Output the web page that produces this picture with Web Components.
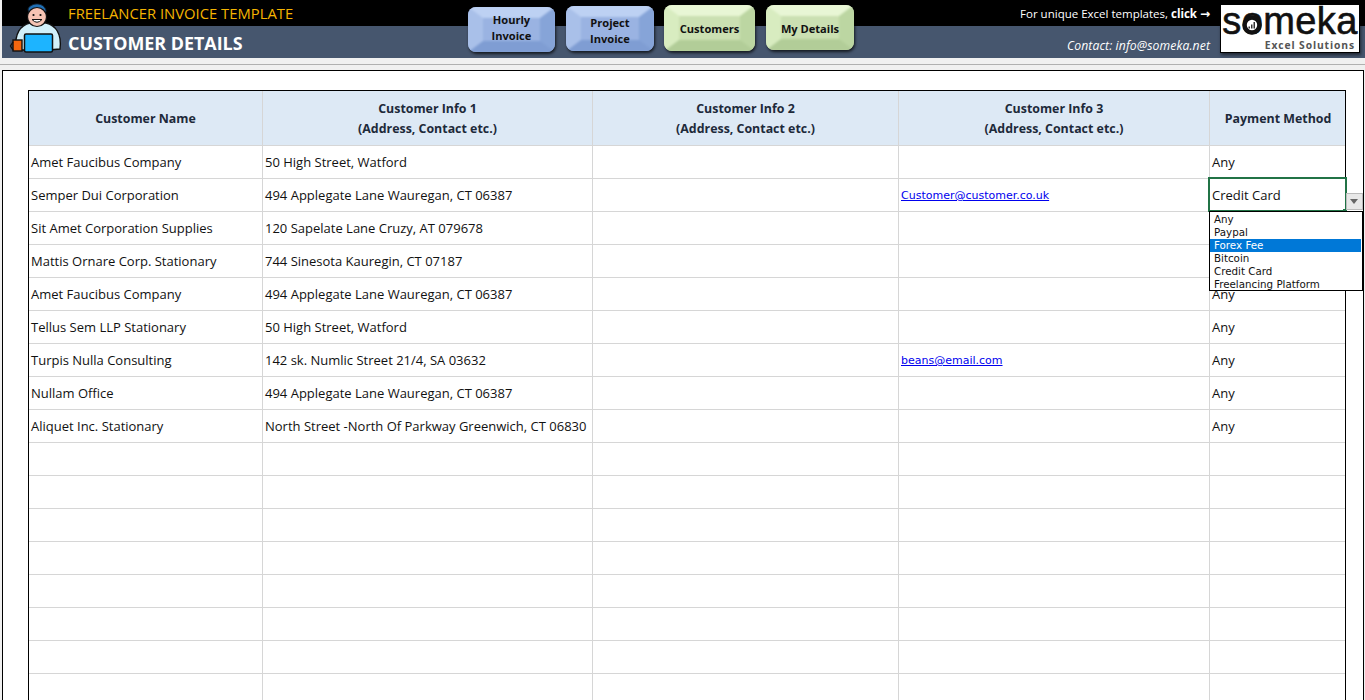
<!DOCTYPE html>
<html><head><meta charset="utf-8"><style>
html,body{margin:0;padding:0;height:700px;overflow:hidden;background:#f0f0f0;}
body{font-family:"Open Sans","Liberation Sans",sans-serif;}
</style></head><body>
<invoice-app></invoice-app>
<script>
class BevelButton extends HTMLElement{
 constructor(){super();this.attachShadow({mode:'open'}).innerHTML=`<style>
 :host{display:flex;align-items:center;justify-content:center;box-sizing:border-box;border-radius:8px;overflow:hidden;
 box-shadow:1px 2px 3px rgba(0,0,0,.7);font:700 11.1px/16px "Open Sans",sans-serif;color:#111;text-align:center;position:relative}
 :host([tone=blue]){background:#9ab3e2}
 :host([tone=green]){background:#cbe0b2}
 .bevel{position:absolute;inset:-1px;box-sizing:border-box;border-style:solid;border-width:12px 16px;filter:blur(1.2px)}
 :host([tone=blue]) .bevel{border-color:#bdd1f3 #86a4d8 #7f9dd3 #a9c0e9}
 :host([tone=green]) .bevel{border-color:#e8f6d5 #bcd6a2 #b2cd98 #d8ecc0}
 span{position:relative}
 </style><div class="bevel"></div><span><slot></slot></span>`}
}
customElements.define('bevel-button',BevelButton);

class AppHeader extends HTMLElement{
 constructor(){super();this.attachShadow({mode:'open'}).innerHTML=`<style>
 :host{display:block;height:58px;margin-left:2px;position:relative;background:linear-gradient(#000 0 26px,#46566e 26px)}
 .grid{display:grid;grid-template-columns:466px 98px 98px 102px 98px 1fr;height:58px;position:relative}
 .title{padding-left:66px;display:grid;grid-template-rows:26px 32px}
 .t1{color:#f5b400;font-size:14.8px;line-height:27px}
 .t2{color:#fff;font-weight:700;font-size:17.9px;line-height:35px}
 .person{position:absolute;left:6px;top:3px}
 .right{display:flex;justify-content:flex-end;min-width:0}
 .txt{display:grid;grid-template-rows:26px 32px;text-align:right;padding-right:10px;color:#fff;white-space:nowrap}
 .txt div:first-child{line-height:28px;font-size:11.5px}
 .txt div:first-child i{font:700 12px "DejaVu Sans",sans-serif}
 .txt div:last-child{font-style:italic;line-height:39px;font-size:12.2px;letter-spacing:.1px}
 .logo{width:140px;height:49px;margin:4px 5px 0 0;background:#fff;border:1px solid #000;box-sizing:border-box;box-shadow:1px 2px 3px rgba(0,0,0,.55);display:flex;flex-direction:column;align-items:center;flex:none;position:relative}
 .logo b{font:400 38px/31px "Liberation Sans",sans-serif;-webkit-text-stroke:.6px #111;letter-spacing:.4px;color:#111;display:block;height:34px;padding-top:1px;box-sizing:border-box}
 .logo span{font:700 10.3px/14px "Open Sans",sans-serif;color:#555;letter-spacing:.9px;align-self:flex-end;margin-right:4px}
 .logo svg{position:absolute;left:21px;top:10px}
 </style>
 <div class="grid">
  <div class="title"><div class="t1">FREELANCER INVOICE TEMPLATE</div><div class="t2">CUSTOMER DETAILS</div></div>
  <div><bevel-button tone="blue" style="margin-top:7px;width:87px;height:45px;padding-bottom:4px">Hourly<br>Invoice</bevel-button></div>
  <div><bevel-button tone="blue" style="margin-top:6px;width:88px;height:45px;padding-top:4px">Project<br>Invoice</bevel-button></div>
  <div><bevel-button tone="green" style="margin-top:5px;width:91px;height:46px;padding-top:2px">Customers</bevel-button></div>
  <div><bevel-button tone="green" style="margin-top:5px;width:88px;height:45px;padding-top:2px">My Details</bevel-button></div>
  <div class="right"><div class="txt"><div>For unique Excel templates, <b>click <i>→</i></b></div><div>Contact: info@someka.net</div></div>
   <div class="logo"><b>someka</b><span>Excel Solutions</span>
    <svg width="20" height="20" viewBox="0 0 20 20"><circle cx="10" cy="10" r="7.500" fill="#fff" stroke="#111" stroke-width="4.600"/><path d="M6.500 11.500h1.500v2h-1.500zM9 9.500h1.500v4H9zM11.500 7h1.500v6.500h-1.500z" fill="#333"/></svg></div></div>
 </div>
 <svg class="person" width="56" height="50" viewBox="0 0 56 50">
  <path d="M8 47 C6 30 13 22 22 20 L38 20 C47 22 54 30 52 46 L40 47Z" fill="#d2f0fa" stroke="#111" stroke-width="1.4"/>
  <path d="M20 6 C23 -1 37 -1 38 8 L37 11 L21 11Z" fill="#1f6fb5" stroke="#123" stroke-width="1"/>
  <ellipse cx="29" cy="14" rx="9.500" ry="9.500" fill="#f6c4b4" stroke="#111" stroke-width="1.2"/>
  <circle cx="25.500" cy="12" r="1.100" fill="#111"/><circle cx="32.500" cy="12" r="1.100" fill="#111"/>
  <path d="M24 16.500 Q29 22 34 16.500Z" fill="#fff" stroke="#111" stroke-width="1"/>
  <rect x="16.500" y="31" width="28" height="18" rx="1.500" fill="#1db4ff" stroke="#111" stroke-width="1.500"/>
  <rect x="5" y="37" width="9" height="11" fill="#f4660f" stroke="#111" stroke-width="1.400"/>
  <path d="M5 39 L2.500 43 L5 47" fill="none" stroke="#111" stroke-width="1.400"/>
 </svg>`}
}
customElements.define('app-header',AppHeader);

class SheetRow extends HTMLElement{
 constructor(){super();this.attachShadow({mode:'open'}).innerHTML=`<style>
 :host{display:grid;grid-template-columns:234px 330px 306px 311px 136px;height:33px;box-sizing:border-box;border-bottom:1px solid #d6d6d6;font-size:13px;color:#111}
 :host([head]){height:55px;background:#dde9f5;font-weight:700;font-size:12.4px;color:#1d2a3a}
 </style><slot></slot>`}
}
customElements.define('sheet-row',SheetRow);

class SheetCell extends HTMLElement{
 constructor(){super();this.attachShadow({mode:'open'}).innerHTML=`<style>
 :host{display:flex;align-items:flex-end;box-sizing:border-box;border-right:1px solid #d6d6d6;padding:0 2px 7px;white-space:nowrap;line-height:18px;min-width:0}
 :host([h]){align-items:center;justify-content:center;text-align:center;padding:2px 2px 0;line-height:20px}
 :host([link]){color:#0000ee;text-decoration:underline;font:11px/18px "DejaVu Sans",sans-serif;padding-bottom:6px}
 :host(:last-child){border-right:0}
 </style><span><slot></slot></span>`}
}
customElements.define('sheet-cell',SheetCell);

class DropList extends HTMLElement{
 constructor(){super();this.attachShadow({mode:'open'}).innerHTML=`<style>
 :host{display:block;position:absolute;left:1208px;top:177px;width:156px;height:114px;pointer-events:none}
 .sel{position:absolute;left:0;top:0;width:139px;height:35px;box-sizing:border-box;border:2px solid #217346;background:#fff;font-size:13px;line-height:33px;padding-left:2px;color:#111}
 .sel::after{content:"";position:absolute;right:-2px;bottom:-2px;width:4px;height:3px;background:#217346}
 .arrow{position:absolute;left:138px;top:16px;width:17px;height:17px;background:#e8e8e8;border:1px solid #bbb;box-sizing:border-box}
 .arrow::after{content:"";position:absolute;left:3px;top:5px;border:4px solid transparent;border-top:5px solid #666}
 .list{position:absolute;left:1px;top:34px;width:154px;height:80px;box-sizing:border-box;border:1px solid #000;background:#fff;padding:1px 0 0;font:10.3px/13px "DejaVu Sans",sans-serif;color:#111}
 .list div{padding-left:4px;height:13px}
 .list .on{background:#0078d7;color:#fff;margin-right:1px}
 </style><div class="sel">Credit Card</div><div class="arrow"></div>
 <div class="list"><div>Any</div><div>Paypal</div><div class="on">Forex Fee</div><div>Bitcoin</div><div>Credit Card</div><div>Freelancing Platform</div></div>`}
}
customElements.define('drop-list',DropList);

class InvoiceApp extends HTMLElement{
 constructor(){super();
 const rows=[["Amet Faucibus Company","50 High Street, Watford","","","Any"],
 ["Semper Dui Corporation","494 Applegate Lane Wauregan, CT 06387","","@Customer@customer.co.uk",""],
 ["Sit Amet Corporation Supplies","120 Sapelate Lane Cruzy, AT 079678","","",""],
 ["Mattis Ornare Corp. Stationary","744 Sinesota Kauregin, CT 07187","","",""],
 ["Amet Faucibus Company","494 Applegate Lane Wauregan, CT 06387","","","Any"],
 ["Tellus Sem LLP Stationary","50 High Street, Watford","","","Any"],
 ["Turpis Nulla Consulting","142 sk. Numlic Street 21/4, SA 03632","","@beans@email.com","Any"],
 ["Nullam Office","494 Applegate Lane Wauregan, CT 06387","","","Any"],
 ["Aliquet Inc. Stationary","North Street -North Of Parkway Greenwich, CT 06830","","","Any"]];
 for(let i=0;i<8;i++)rows.push(["","","","",""]);
 const html=rows.map(r=>'<sheet-row>'+r.map(c=>c[0]==='@'?`<sheet-cell link>${c.slice(1)}</sheet-cell>`:`<sheet-cell>${c}</sheet-cell>`).join('')+'</sheet-row>').join('');
 this.attachShadow({mode:'open'}).innerHTML=`<style>
 :host{display:block;height:700px;overflow:hidden;position:relative}
 .rule{height:6px;box-sizing:border-box;margin-top:6px;border-top:1px solid #b0b0b0;background:#f0f0f0}
 .sheet{margin-left:2px;background:#fff;border:1px solid #000;height:640px;padding:19px 0 0 25px;box-sizing:border-box;width:1362px}
 .table{width:1318px;border:1px solid #000;box-sizing:border-box;height:640px;overflow:hidden;border-bottom:0}
 </style>
 <app-header></app-header>
 <div class="rule"></div>
 <div class="sheet"><div class="table">
  <sheet-row head><sheet-cell h>Customer Name</sheet-cell><sheet-cell h>Customer Info 1<br>(Address, Contact etc.)</sheet-cell><sheet-cell h>Customer Info 2<br>(Address, Contact etc.)</sheet-cell><sheet-cell h>Customer Info 3<br>(Address, Contact etc.)</sheet-cell><sheet-cell h>Payment Method</sheet-cell></sheet-row>
  ${html}
 </div></div>
 <drop-list></drop-list>`}
}
customElements.define('invoice-app',InvoiceApp);
</script>
</body></html>
